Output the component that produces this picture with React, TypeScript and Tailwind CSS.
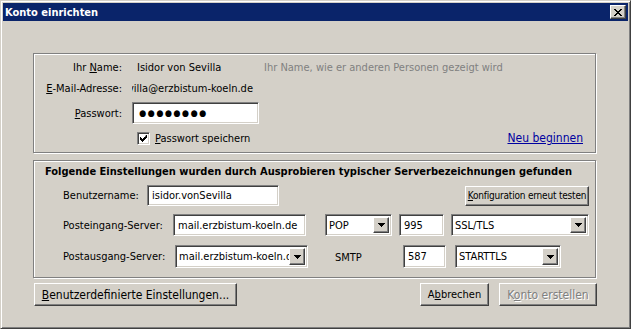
import React from "react";

const FONT = { fontFamily: '"DejaVu Sans Condensed", "DejaVu Sans", Tahoma, sans-serif' };

const sunken =
  "border border-[#808080] border-r-white border-b-white shadow-[inset_1px_1px_0_#404040,inset_-1px_-1px_0_#d4d0c8] bg-white";
const raised =
  "border border-white border-r-[#404040] border-b-[#404040] shadow-[inset_-1px_-1px_0_#808080] bg-[#d4d0c8]";
const etched = "border border-[#808080] shadow-[inset_1px_1px_0_#ffffff,1px_1px_0_#ffffff]";

function Arrow() {
  return (
    <svg width="7" height="4" viewBox="0 0 7 4">
      <path d="M0 0h7v1h-1v1h-1v1h-1v1h-1v-1h-1v-1h-1v-1h-1z" fill="#000" />
    </svg>
  );
}

function TextBox({ w, h, value, pad = 3 }: { w: string; h: string; value: string; pad?: number }) {
  return (
    <div className={`${sunken} ${w} ${h} flex items-center overflow-hidden whitespace-nowrap`}>
      <span style={{ paddingLeft: pad }}>{value}</span>
    </div>
  );
}

function Select({ w, h, value }: { w: string; h: string; value: string }) {
  return (
    <div className={`${sunken} ${w} ${h} flex items-stretch p-[2px] overflow-hidden`}>
      <div className="flex-1 min-w-0 overflow-hidden whitespace-nowrap flex items-center pl-[1px]">{value}</div>
      <div className={`${raised} w-[16px] shrink-0 flex items-center justify-center`}>
        <Arrow />
      </div>
    </div>
  );
}

export default function App() {
  return (
    <div
      style={FONT}
      className="w-[631px] h-[329px] bg-[#d4d0c8] text-[11px] text-black leading-none border border-[#d4d0c8] border-r-[#404040] border-b-[#404040] shadow-[inset_1px_1px_0_#ffffff,inset_-1px_-1px_0_#808080] p-[2px] select-none"
    >
      <div className="h-[18px] bg-[#0a246a] flex items-center pl-[2px]">
        <span className="text-white font-bold text-[11px]">Konto einrichten</span>
        <div className={`${raised} ml-auto mr-[2px] w-[16px] h-[14px] flex items-center justify-center`}>
          <svg width="8" height="7" viewBox="0 0 8 7">
            <path
              d="M0 0h2v1h1v1h2v-1h1v-1h2v1h-1v1h-1v1h-1v1h1v1h1v1h1v1h-2v-1h-1v-1h-2v1h-1v1h-2v-1h1v-1h1v-1h1v-1h-1v-1h-1v-1h-1z"
              fill="#000"
            />
          </svg>
        </div>
      </div>

      <div className="pl-[30px]">
        {/* group 1 */}
        <div className={`${etched} mt-[32px] w-[563px] h-[100px] flex flex-col`}>
          <div className="mt-[4px] h-[18px] flex items-center">
            <div className="w-[88px] text-right">
              Ihr <u>N</u>ame:
            </div>
            <div className="ml-[15px] w-[127px]">Isidor von Sevilla</div>
            <div className="text-[#808080]">Ihr Name, wie er anderen Personen gezeigt wird</div>
          </div>
          <div className="mt-[3px] h-[18px] flex items-center">
            <div className="w-[88px] text-right whitespace-nowrap">
              <u>E</u>-Mail-Adresse:
            </div>
            <div className="ml-[10px] w-[126px] h-[18px] flex items-center justify-end overflow-hidden whitespace-nowrap pr-[5px]">
              <span>isidor.vonSevilla@erzbistum-koeln.de</span>
            </div>
          </div>
          <div className="mt-[5px] h-[22px] flex items-center">
            <div className="w-[88px] text-right">
              <u>P</u>asswort:
            </div>
            <div className={`${sunken} ml-[10px] w-[127px] h-[22px] flex items-center pl-[6px] text-[9px] tracking-[1.5px]`}>
              ●●●●●●●●
            </div>
          </div>
          <div className="mt-[7px] h-[14px] flex items-center">
            <div className={`${sunken} ml-[103px] w-[13px] h-[13px] flex items-center justify-center`}>
              <svg width="7" height="7" viewBox="0 0 7 7">
                <path d="M6 0h1v3h-1v1h-1v1h-1v1h-1v1h-1v-1h-1v-1h-1v-1h-1v-3h1v1h1v1h1v1h1v-1h1v-1h1z" fill="#000" />
              </svg>
            </div>
            <div className="ml-[5px]">
              <u>P</u>asswort speichern
            </div>
            <div className="ml-auto mr-[12px] text-[#0000a0] underline text-[12px]">Neu beginnen</div>
          </div>
        </div>

        {/* group 2 */}
        <div className={`${etched} mt-[7px] w-[563px] h-[118px] flex flex-col`}>
          <div className="mt-[2px] h-[16px] flex items-center pl-[11px] font-bold whitespace-nowrap">
            Folgende Einstellungen wurden durch Ausprobieren typischer Serverbezeichnungen gefunden
          </div>
          <div className="mt-[6px] h-[21px] flex items-center pl-[29px]">
            <div className="w-[84px]">Benutzername:</div>
            <TextBox w="w-[132px]" h="h-[21px]" value="isidor.vonSevilla" pad={4} />
            <div className={`${raised} ml-auto mr-[6px] w-[124px] h-[20px] flex items-center justify-center text-[10px] whitespace-nowrap tracking-[-0.2px]`}>
              <span>
                <u>K</u>onfiguration erneut testen
              </span>
            </div>
          </div>
          <div className="mt-[8px] h-[22px] flex items-center pl-[29px]">
            <div className="w-[110px]">Posteingang-Server:</div>
            <TextBox w="w-[133px]" h="h-[22px]" value="mail.erzbistum-koeln.de" pad={4} />
            <div className="ml-[19px]">
              <Select w="w-[67px]" h="h-[22px]" value="POP" />
            </div>
            <div className="ml-[7px]">
              <TextBox w="w-[45px]" h="h-[22px]" value="995" pad={4} />
            </div>
            <div className="ml-[7px]">
              <Select w="w-[138px]" h="h-[22px]" value="SSL/TLS" />
            </div>
          </div>
          <div className="mt-[9px] h-[23px] flex items-center pl-[29px]">
            <div className="w-[112px]">Postausgang-Server:</div>
            <Select w="w-[133px]" h="h-[23px]" value="mail.erzbistum-koeln.de" />
            <div className="ml-[27px] w-[68px] pt-[2px]">SMTP</div>
            <TextBox w="w-[43px]" h="h-[23px]" value="587" pad={4} />
            <div className="ml-[9px]">
              <Select w="w-[106px]" h="h-[23px]" value="STARTTLS" />
            </div>
          </div>
        </div>

        {/* buttons */}
        <div className="mt-[5px] w-[564px] h-[23px] flex items-stretch">
          <div className={`${raised} ml-[1px] w-[203px] flex items-center justify-center text-[12px]`}>
            <span>
              <u>B</u>enutzerdefinierte Einstellungen...
            </span>
          </div>
          <div className={`${raised} ml-auto w-[69px] flex items-center justify-center`}>
            <span>
              A<u>b</u>brechen
            </span>
          </div>
          <div className={`${raised} ml-[10px] w-[98px] flex items-center justify-center text-[#808080] text-[12px]`}>
            <span className="[text-shadow:1px_1px_0_#ffffff]">
              K<u>o</u>nto erstellen
            </span>
          </div>
        </div>
      </div>
    </div>
  );
}
